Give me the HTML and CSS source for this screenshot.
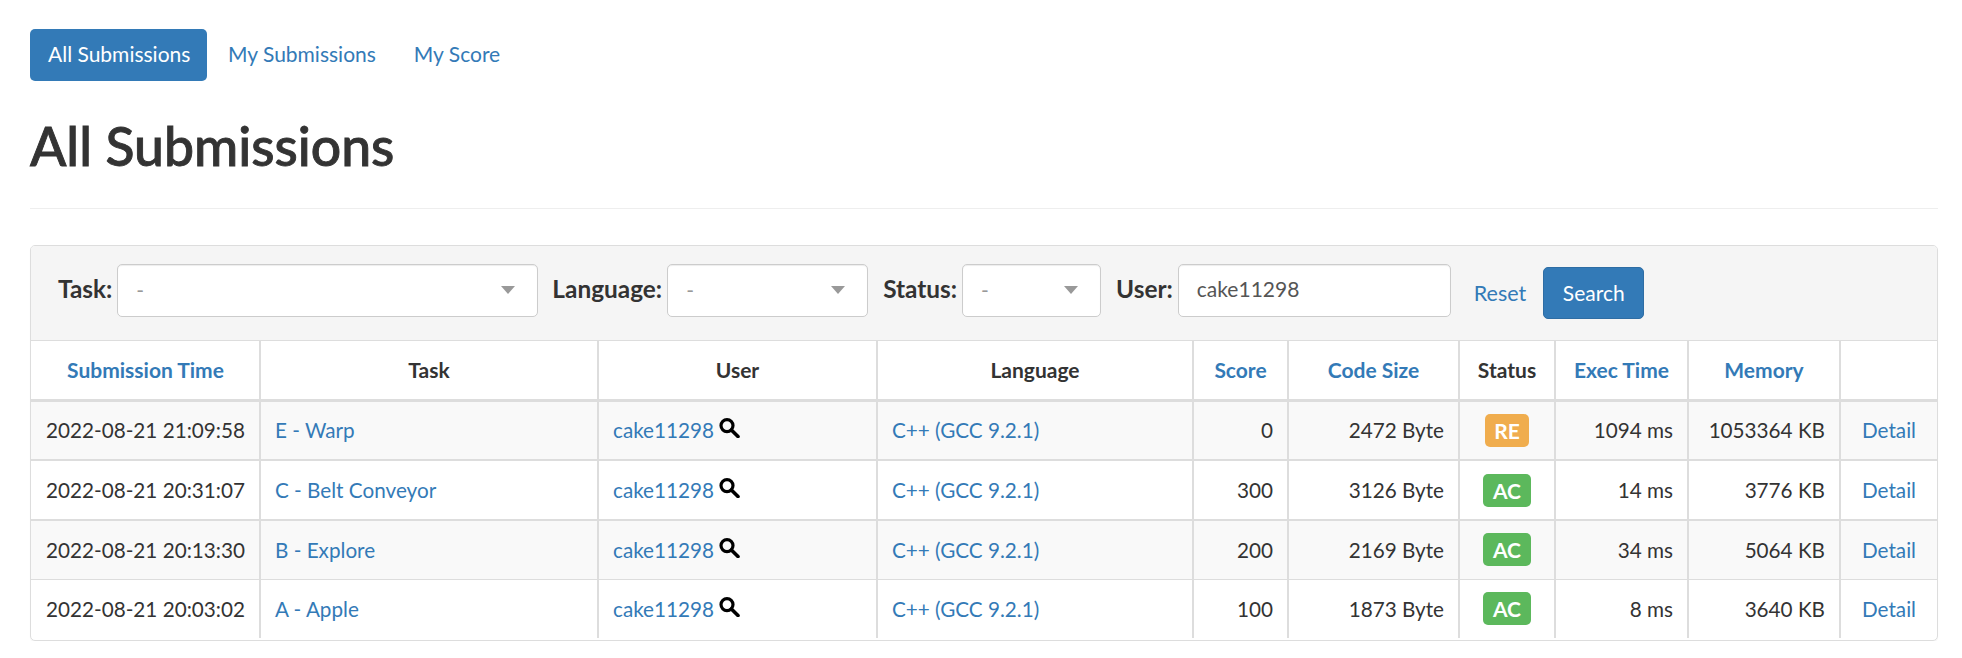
FILE: index.html
```html
<!DOCTYPE html>
<html lang="en">
<head>
<meta charset="utf-8">
<title>All Submissions</title>
<link rel="stylesheet" href="styles.css">
</head>
<body>
<svg class="defs" width="0" height="0" aria-hidden="true"><symbol id="search" viewBox="0 0 21 20"><circle cx="8" cy="7.6" r="6" fill="none" stroke="#000" stroke-width="3.2"/><path d="M12.4 12l6.6 6.6" fill="none" stroke="#000" stroke-width="3.6" stroke-linecap="round"/></symbol></svg>
<nav class="tabs">
  <a class="tab active" href="#">All Submissions</a>
  <a class="tab" href="#">My Submissions</a>
  <a class="tab" href="#">My Score</a>
</nav>
<h1 class="title">All Submissions</h1>
<hr class="rule">
<section class="panel">
  <form class="filters">
    <label class="flabel">Task:</label>
    <div class="select s-task"><span>-</span><i class="caret"></i></div>
    <label class="flabel">Language:</label>
    <div class="select s-lang"><span>-</span><i class="caret"></i></div>
    <label class="flabel">Status:</label>
    <div class="select s-status"><span>-</span><i class="caret"></i></div>
    <label class="flabel">User:</label>
    <input class="input" type="text" value="cake11298">
    <a class="reset" href="#">Reset</a>
    <button class="search" type="button">Search</button>
  </form>
  <table class="subs">
    <colgroup>
      <col class="c1"><col class="c2"><col class="c3"><col class="c4"><col class="c5"><col class="c6"><col class="c7"><col class="c8"><col class="c9"><col class="c10">
    </colgroup>
    <thead>
      <tr>
        <th><a href="#">Submission Time</a></th><th>Task</th><th>User</th><th>Language</th><th><a href="#">Score</a></th><th><a href="#">Code Size</a></th><th>Status</th><th><a href="#">Exec Time</a></th><th><a href="#">Memory</a></th><th></th>
      </tr>
    </thead>
    <tbody>
      <tr class="odd">
        <td>2022-08-21 21:09:58</td><td><a href="#">E - Warp</a></td>
        <td><a href="#">cake11298</a> <a href="#"><svg class="mag"><use href="#search"/></svg></a></td>
        <td><a href="#">C++ (GCC 9.2.1)</a></td><td class="r">0</td><td class="r">2472 Byte</td>
        <td class="c"><span class="badge re">RE</span></td><td class="r">1094 ms</td><td class="r">1053364 KB</td><td class="c"><a href="#">Detail</a></td>
      </tr>
      <tr>
        <td>2022-08-21 20:31:07</td><td><a href="#">C - Belt Conveyor</a></td>
        <td><a href="#">cake11298</a> <a href="#"><svg class="mag"><use href="#search"/></svg></a></td>
        <td><a href="#">C++ (GCC 9.2.1)</a></td><td class="r">300</td><td class="r">3126 Byte</td>
        <td class="c"><span class="badge ac">AC</span></td><td class="r">14 ms</td><td class="r">3776 KB</td><td class="c"><a href="#">Detail</a></td>
      </tr>
      <tr class="odd thin">
        <td>2022-08-21 20:13:30</td><td><a href="#">B - Explore</a></td>
        <td><a href="#">cake11298</a> <a href="#"><svg class="mag"><use href="#search"/></svg></a></td>
        <td><a href="#">C++ (GCC 9.2.1)</a></td><td class="r">200</td><td class="r">2169 Byte</td>
        <td class="c"><span class="badge ac">AC</span></td><td class="r">34 ms</td><td class="r">5064 KB</td><td class="c"><a href="#">Detail</a></td>
      </tr>
      <tr class="thin">
        <td>2022-08-21 20:03:02</td><td><a href="#">A - Apple</a></td>
        <td><a href="#">cake11298</a> <a href="#"><svg class="mag"><use href="#search"/></svg></a></td>
        <td><a href="#">C++ (GCC 9.2.1)</a></td><td class="r">100</td><td class="r">1873 Byte</td>
        <td class="c"><span class="badge ac">AC</span></td><td class="r">8 ms</td><td class="r">3640 KB</td><td class="c"><a href="#">Detail</a></td>
      </tr>
    </tbody>
  </table>
</section>
</body>
</html>
```
FILE: styles.css
```css
* { box-sizing: border-box; }
html, body { margin: 0; background: #fff; }
body {
  padding: 29px 24px 0 30px;
  font-family: Lato, "Liberation Sans", sans-serif;
  font-size: 21px;
  line-height: 26px;
  color: #333;
  overflow: hidden;
}
a { color: #337ab7; text-decoration: none; }
.defs { position: absolute; }

.tabs { display: flex; gap: 2px; }
.tab { padding: 12px 18px 14px; border-radius: 5px; height: 52px; }
.tab.active { background: #337ab7; color: #fff; width: 177px; margin-right: 1px; white-space: nowrap; }

.title {
  margin: 36px 0 0;
  font-size: 53.5px;
  line-height: 56px;
  font-weight: 500;
  color: #333;
  -webkit-text-stroke: 0.9px #333;
}
.rule { margin: 0; margin-top: 35px; border: 0; border-top: 1px solid #eee; }

.panel {
  margin-top: 36px;
  height: 396px;
  border: 1px solid #ddd;
  border-radius: 5px;
  box-shadow: 0 1px 1px rgba(0,0,0,.05);
  overflow: hidden;
}
.filters {
  display: flex;
  align-items: center;
  height: 95px;
  padding: 0 0 1px 27px;
  background: #f5f5f5;
  border-bottom: 1px solid #ddd;
}
.flabel { font-size: 24.4px; font-weight: 700; margin: 0 5px 7px 0; color: #333; white-space: nowrap; }
.select, .input {
  height: 53px;
  margin-bottom: 5px;
  background: #fff;
  border: 1px solid #ccc;
  border-radius: 5px;
  box-shadow: inset 0 1px 1px rgba(0,0,0,.075);
  font: inherit;
}
.select {
  display: flex;
  align-items: center;
  justify-content: space-between;
  padding: 0 22px 0 18px;
  color: #999;
  margin-right: 14px;
  flex: none;
}
.s-task { width: 421px; }
.s-lang { width: 201px; margin-right: 15px; }
.s-status { width: 139px; margin-right: 15px; }
.caret {
  width: 0; height: 0;
  border-left: 7px solid transparent;
  border-right: 7px solid transparent;
  border-top: 8px solid #999;
}
.input { width: 273px; flex: none; padding: 0 18px 3px; color: #555; }
.reset { margin-left: 23px; font-size: 21.5px; }
.search {
  margin-left: 17px;
  width: 101px; height: 52px;
  flex: none;
  background: #337ab7;
  color: #fff;
  border: 1px solid #2e6da4;
  border-radius: 5px;
  font: inherit;
  padding: 0;
}

.subs { width: 100%; table-layout: fixed; border-collapse: collapse; }
.c1 { width: 229px; } .c2 { width: 338px; } .c3 { width: 279px; } .c4 { width: 316px; } .c5 { width: 95px; }
.c6 { width: 171px; } .c7 { width: 96px; } .c8 { width: 133px; } .c9 { width: 152px; } .c10 { width: 97px; }
.subs th, .subs td { height: 60px; padding: 0 14px; border-left: 2px solid #ddd; white-space: nowrap; }
.subs th:first-child, .subs td:first-child { border-left: 0; padding-left: 15px; }
.subs th { font-weight: 700; text-align: center; color: #333; height: 59px; border-bottom: 3px solid #ddd; }
.subs td { border-bottom: 2px solid #ddd; font-size: 20.7px; }
.subs tr.thin td { height: 59px; border-bottom-width: 1px; }
.subs tr:last-child td { border-bottom: 0; }
.odd td { background: #f9f9f9; }
.r { text-align: right; }
.c { text-align: center; }
.mag { width: 21px; height: 20px; vertical-align: 0; }
.badge {
  display: inline-block;
  width: 44px; height: 33px;
  line-height: 33px;
  text-align: center;
  border-radius: 5px;
  color: #fff;
  font-size: 21px;
  font-weight: 700;
  vertical-align: middle;
}
.re { background: #f0ad4e; }
.ac { background: #5cb85c; width: 48px; }
```
